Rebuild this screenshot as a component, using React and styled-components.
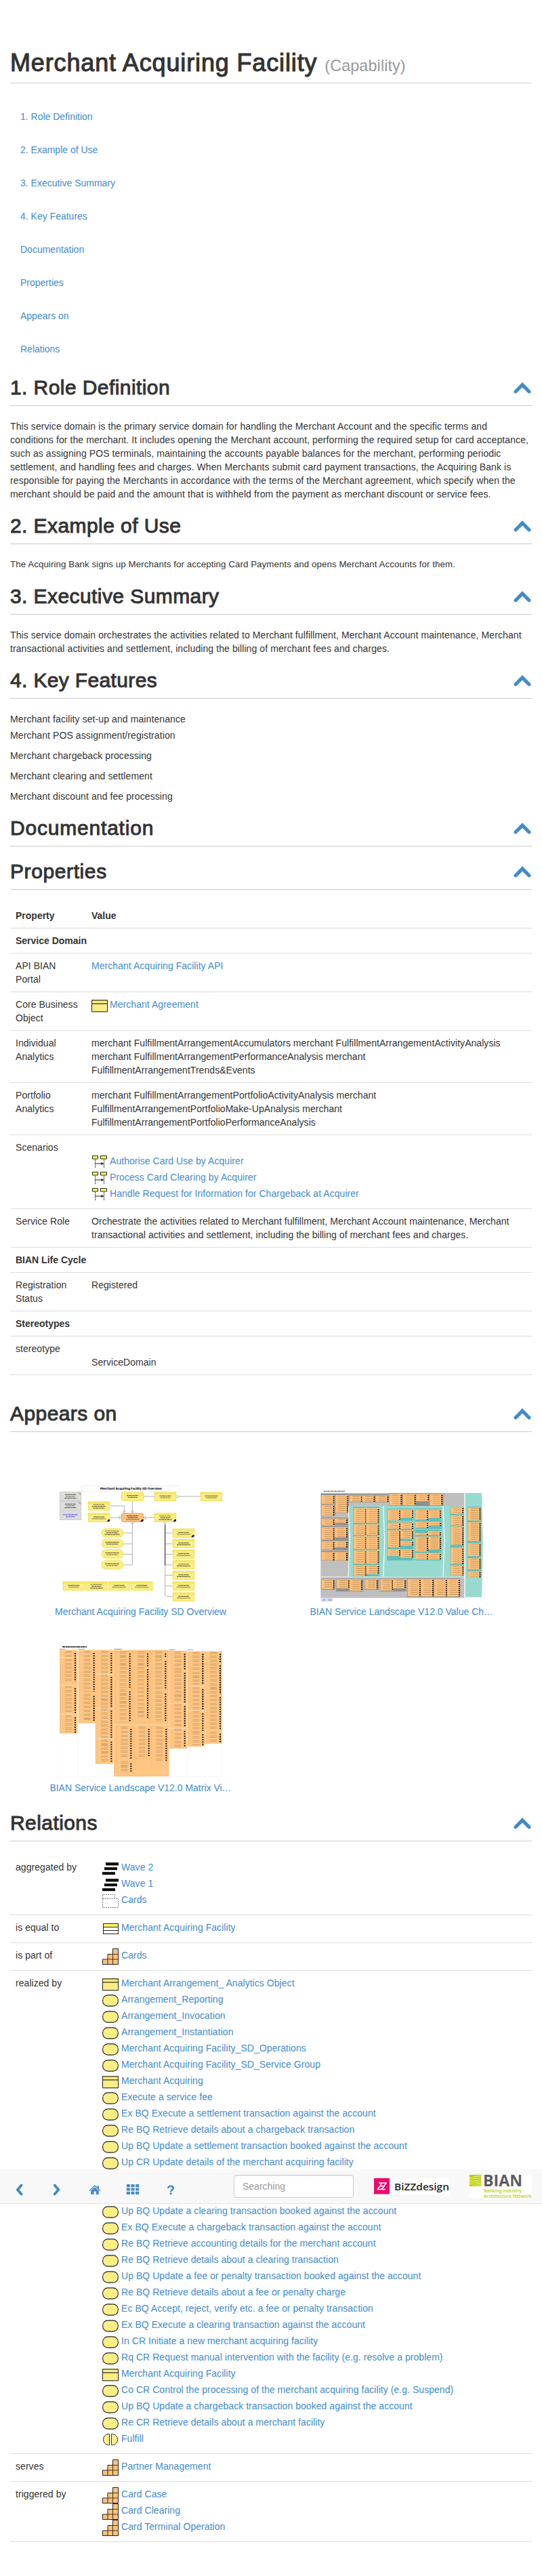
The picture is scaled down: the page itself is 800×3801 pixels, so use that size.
import React from 'react';
import styled, { createGlobalStyle } from 'styled-components';

const blue = '#428bca';
const ink = '#333';

const GlobalStyle = createGlobalStyle`
  * { box-sizing: border-box; }
  body {
    margin: 0;
    background: #fff;
    color: ${ink};
    font: 14px/20px "Liberation Sans", Arial, sans-serif;
  }
`;

const Page = styled.div`
  position: relative;
  display: flex;
  flex-direction: column;
  height: 3801px;
  padding: 73px 15px 0;
`;

const Title = styled.h1`
  margin: 0;
  height: 50px;
  border-bottom: 1px solid #ccc;
  font-size: 36px;
  line-height: 40px;
  font-weight: 400;
  letter-spacing: 0.86px;
  -webkit-text-stroke: 1.1px ${ink};
  white-space: nowrap;
`;

const Kind = styled.small`
  font-size: 23.4px;
  color: #999;
  letter-spacing: 0.1px;
  -webkit-text-stroke: 0;
`;

const Contents = styled.nav`
  display: flex;
  flex-direction: column;
  gap: 9px;
  padding: 29px 0 0;
`;

const ContentsLink = styled.a`
  padding: 10px 15px;
  color: ${blue};
  white-space: nowrap;
`;

const SectionHeader = styled.div`
  display: flex;
  justify-content: space-between;
  height: 44px;
  margin-top: 20px;
  padding-right: 1px;
  border-bottom: 1px solid #ccc;
`;

const SectionTitle = styled.h2`
  margin: 0;
  font-size: 30px;
  line-height: 33px;
  font-weight: 400;
  letter-spacing: ${(p) => p.$spacing ?? 0.42}px;
  -webkit-text-stroke: 0.95px ${ink};
`;

const UpIcon = styled.svg`
  display: block;
  width: 26px;
  height: 17px;
  margin-top: 9px;
`;

const Prose = styled.div`
  padding-top: 20px;
  font-size: ${(p) => p.$size ?? 14}px;
  letter-spacing: ${(p) => p.$spacing ?? 0.09}px;
  white-space: nowrap;
`;

const Feature = styled.p`
  margin: 0 0 ${(p) => p.$gap}px;
`;

const Table = styled.div`
  margin: 20px 0;
  border-bottom: 1px solid #ddd;
`;

const Row = styled.div`
  display: grid;
  grid-template-columns: ${(p) => p.$label}px 1fr;
  padding: 8px;
  white-space: nowrap;
  font-weight: ${(p) => (p.$bold ? 700 : 400)};
  letter-spacing: ${(p) => (p.$bold ? 0 : 0.05)}px;
  & + & {
    border-top: 1px solid #ddd;
  }
`;

const Item = styled.div`
  display: flex;
  height: 24px;
  gap: ${(p) => p.$gap ?? 4}px;
`;

const ItemIcon = styled.svg`
  display: block;
  width: 24px;
  height: 24px;
`;

const Link = styled.a`
  color: ${blue};
`;

const Blank = styled.div`
  height: ${(p) => p.$h}px;
`;

const Gallery = styled.div`
  display: grid;
  grid-template-columns: 385px 385px;
  grid-auto-rows: 260px;
  padding-top: 20px;
`;

const Card = styled.figure`
  margin: 0;
  display: flex;
  flex-direction: column;
  align-items: center;
  justify-content: flex-end;
  padding-bottom: 5px;
`;

const Thumb = styled.svg`
  display: block;
  width: 240px;
  height: ${(p) => p.$h}px;
  margin-bottom: ${(p) => p.$mb}px;
`;

const Caption = styled.figcaption`
  color: ${blue};
  width: 270px;
  text-align: center;
  white-space: nowrap;
`;

const Toolbar = styled.div`
  position: absolute;
  left: 0;
  right: 0;
  top: 3201px;
  height: 51px;
  display: flex;
  background: #f8f8f8;
  border-bottom: 1px solid #e7e7e7;
`;

const ToolButton = styled.a`
  width: 56px;
  display: flex;
  justify-content: center;
  padding-top: 21px;
  color: ${blue};
`;

const Glyph = styled.svg`
  width: 20px;
  height: 18px;
`;

const Search = styled.input`
  width: 177px;
  height: 34px;
  margin: 8px 0 0 65px;
  padding: 6px 12px;
  border: 1px solid #ccc;
  border-radius: 4px;
  background: #fff;
  box-shadow: inset 0 1px 1px rgba(0, 0, 0, 0.075);
  font: 14px/20px "Liberation Sans", Arial, sans-serif;
  &::placeholder {
    color: #999;
    opacity: 1;
  }
`;

const BizLogo = styled.svg`
  width: 111px;
  height: 25px;
  margin: 13px 0 0 30px;
  overflow: visible;
`;

const BianLogo = styled.svg`
  width: 92px;
  height: 36px;
  margin: 8px 0 0 30px;
  overflow: visible;
`;

const Header = ({ children, spacing }) => (
  <SectionHeader>
    <SectionTitle $spacing={spacing}>{children}</SectionTitle>
    <UpIcon viewBox="0 0 26 17">
      <path d="M13 0 L25.2 12.6 Q26.2 14 25 15.4 Q23 17.4 21 15.6 L13 7.4 L5 15.6 Q3 17.4 1 15.4 Q-0.2 14 0.8 12.6 Z" fill={blue} />
    </UpIcon>
  </SectionHeader>
);

const yellow = '#fbee84';

const icons = {
  object: (
    <>
      <rect x="0.5" y="4" width="23" height="16.5" fill={yellow} stroke="#222" />
      <path d="M0 3.5H24M0 20.8H24" stroke="#6f6a3c" strokeWidth="1.2" />
      <path d="M1 9H23" stroke="#7d7742" strokeWidth="2" />
    </>
  ),
  service: <rect x="0.6" y="3.9" width="22.8" height="16.2" rx="7.6" fill={yellow} stroke="#222" strokeWidth="1.1" />,
  wave: (
    <path d="M5 3.2H24V7.4H5ZM3 10.2H22V14.2H3ZM0 17.2H19V21.2H0Z" fill="#000" />
  ),
  grouping: (
    <g fill="none" stroke="#777" strokeDasharray="2 1.3">
      <path d="M0.5 21.5V2.5H18.5V8" />
      <path d="M0.5 8.5H23.5V21.5H0.5" />
    </g>
  ),
  entity: (
    <>
      <rect x="1.5" y="4.5" width="22" height="15" fill="#fff" stroke="#222" />
      <rect x="2" y="5" width="21" height="4" fill="#ffff66" />
      <path d="M1 9.5H24M1 14.5H24" stroke="#222" />
    </>
  ),
  capability: (
    <>
      <path d="M15.5 0.5H23.5V23.5H0.5V16H8V8.5H15.5Z" fill="#fdc27e" stroke="#222" />
      <path d="M15.5 8.5H23.5M8 16H23.5M8 16V23.5M15.5 8.5V23.5" stroke="#4d3717" strokeWidth="1.1" fill="none" />
    </>
  ),
  func: (
    <g fill={yellow} stroke="#333">
      <path d="M10.5 3.5H8.7A8.2 8.2 0 0 0 8.7 19.8H10.5Z" />
      <path d="M13.5 3.5H15.3A8.2 8.2 0 0 1 15.3 19.8H13.5Z" />
    </g>
  ),
  scenario: (
    <>
      <path d="M1.5 2.5H9.5V7H1.5ZM13.5 2.5H22.5V7H13.5Z" fill="#ffff66" stroke="#222" />
      <path d="M5.5 8V21M18.5 8V21" stroke="#444" strokeDasharray="2.4 0.8" />
      <path d="M5.5 14H15" stroke="#222" />
      <path d="M14.5 12L18.5 14L14.5 16Z" fill="#111" />
    </>
  ),
};

const IconItem = ({ icon, children, gap }) => (
  <Item $gap={gap}>
    <ItemIcon viewBox="0 0 24 24">{icons[icon]}</ItemIcon>
    <Link>{children}</Link>
  </Item>
);

/* dark dashes that stand for the unreadable micro labels of a thumbnail */
const Micro = ({ cx, cy, lines, w = 60, h = 8 }) =>
  Array.from({ length: lines }, (_, i) => {
    const width = w * (1 - ((i * 37 + cx) % 5) * 0.07);
    return (
      <path
        key={i}
        d={`M${cx - width / 2} ${cy - ((lines - 1) * h) / 2 + i * h}h${width}`}
        stroke="#3b3a20"
        strokeWidth="3.4"
        strokeDasharray="7 1.5 4 1 9 2"
        opacity="0.8"
      />
    );
  });

const overviewBoxes = [
  [504, 66, 2], [708, 66, 2], [210, 108, 3], [210, 159, 2], [504, 159, 3],
  [585, 228, 2], [585, 274, 2], [585, 321, 2], [585, 368, 2], [585, 415, 2], [585, 462, 2], [585, 510, 2],
  [99, 462, 2], [199, 462, 3], [300, 462, 2], [400, 462, 2],
];

const OverviewThumb = () => (
  <Thumb viewBox="84 34 720 519" $h={173} $mb={4}>
    <rect x="181" y="39" width="436" height="25" fill="#fff" stroke="#ddd" strokeWidth="1.5" />
    <text x="400" y="54" textAnchor="middle" fontSize="13.5" fontWeight="700" fontFamily="DejaVu Sans, sans-serif" textLength="273" fill="#111">
      Merchant Acquiring Facility SD Overview
    </text>
    {[66, 108, 151].map((y, i) => (
      <g key={y}>
        <rect x="85" y={y} width="94" height="38" fill="#ddd" stroke="#bbb" strokeWidth="2" />
        {i < 2 ? <Micro cx={132} cy={y + 19} lines={3} w={56} /> : <path d="M98 166H165M112 175H152" stroke="#33f" strokeWidth="3.4" strokeDasharray="7 1.5 4 1" />}
        {i < 2 && <path d={`M167 ${y + 3}l9 3v6z`} fill="#e8d94c" stroke="#555" />}
      </g>
    ))}
    <g fill="none" stroke="#888" strokeWidth="2">
      <path d="M456 85H504M606 85H708M406 104V158M308 127H370V152M308 179H350M504 179H462" />
      <path d="M365 247H406M365 295H406M365 341H406M365 388H406V205" />
      <path d="M551 205V522Q551 529 585 529M551 247H585M551 295H585M551 341H585M551 388H585M551 434H585M551 481H585" />
      <path d="M551 210V390" stroke="#222" strokeWidth="3" />
    </g>
    <g fill="#fff" stroke="#777" strokeWidth="1.5">
      <path d="M401 151h11l-5 9zM365 151h11l-5 9zM348 173v12l10-6zM464 173v12l-10-6zM401 206h11l-5-9z" />
      <circle cx="605" cy="86" r="5" /><circle cx="551" cy="203" r="5" />
    </g>
    {overviewBoxes.map(([x, y, n]) => (
      <g key={`${x}-${y}`}>
        <rect x={x + 1} y={y + 1} width="94" height="37" fill={yellow} stroke="#efe04d" strokeWidth="3" />
        <path d={`M${x - 4} ${y + 6}H${x + 95}`} stroke="#efe04d" strokeWidth="3" />
        <Micro cx={x + 48} cy={y + 21} lines={n} />
      </g>
    ))}
    {[228, 274, 321, 369].map((y) => (
      <g key={y}>
        <rect x="270" y={y} width="95" height="38" rx="17" fill={yellow} stroke="#efe04d" strokeWidth="2.5" />
        <Micro cx={317} cy={y + 18} lines={y === 228 ? 3 : 2} w={72} />
      </g>
    ))}
    <rect x="359" y="67" width="96" height="37" rx="6" fill={yellow} stroke="#efe04d" strokeWidth="3" />
    <Micro cx={407} cy={85} lines={2} />
    <rect x="359" y="160" width="96" height="37" rx="5" fill="#fdc27e" stroke="#ee9a5e" strokeWidth="3" />
    <Micro cx={407} cy={179} lines={3} />
    <path d="M295 193l6-6h6v5l-6 5h-6zM443 193l6-6h6v5l-6 5h-6zM588 193l6-6h6v5l-6 5h-6zM668 262l6-6h6v5l-6 5h-6z" fill="#111" />
  </Thumb>
);

/* x, y, height of each column of services */
const landscapeCols = [
  [72, 78, 40], [72, 122, 48], [133, 78, 78], [72, 182, 30], [130, 182, 20], [72, 220, 56], [130, 220, 46],
  [72, 282, 38], [130, 282, 28], [72, 330, 38], [130, 330, 38],
  [196, 80, 29], [252, 80, 29], [312, 80, 29], [372, 73, 51], [433, 73, 51], [492, 73, 32], [552, 73, 51],
  [214, 136, 66], [270, 136, 66], [214, 208, 48], [270, 208, 48], [214, 260, 58], [270, 260, 58],
  [214, 323, 60], [270, 323, 60], [214, 389, 48], [270, 389, 40],
  [365, 142, 48], [422, 142, 38], [365, 200, 28], [422, 200, 28], [365, 234, 76], [422, 234, 38], [422, 282, 20], [365, 318, 30], [422, 318, 38],
  [488, 142, 46], [545, 142, 38], [488, 196, 28], [545, 196, 18], [488, 246, 10], [545, 238, 18], [488, 262, 67], [545, 262, 57], [488, 335, 29], [545, 335, 29],
  [645, 130, 31], [645, 167, 46], [645, 217, 82], [645, 311, 73], [645, 390, 44],
  [721, 132, 59], [721, 198, 84], [721, 291, 58], [721, 358, 50], [721, 415, 28],
  [72, 452, 43], [139, 452, 40], [196, 452, 51], [265, 452, 43], [333, 452, 50], [389, 452, 40],
  [455, 450, 78], [512, 450, 78], [572, 450, 78], [629, 450, 78],
];

const LandscapeThumb = () => (
  <Thumb viewBox="68 57 720 496" $h={165} $mb={4}>
    <path d="M82 61H178" stroke="#222" strokeWidth="3" strokeDasharray="8 2 4 2" />
    <path d="M68 69H706V534H68Z" fill="#bfbfbf" />
    <path d="M68 441H706" stroke="#eee" strokeWidth="3" />
    <g fill="#8f8f8f">
      <path d="M70 72H191V119H132V172H70ZM132 72H192V158H132ZM194 74H370V111H194ZM370 70H612V126H370Z" />
      <path d="M70 178H191V212H70ZM70 215H191V278H70ZM70 279H191V322H70ZM70 325H191V370H70ZM70 449H132V498H70ZM137 449H257V506H137ZM263 449H326V498H263ZM331 449H448V506H331ZM453 447H687V531H453Z" />
    </g>
    <path d="M708 69H783L788 300L783 531H708ZM194 127H704V440H194Z" fill="#98dacf" />
    <path d="M191 127L197 283L191 440M346 127L352 283L346 440M611 127L618 283L611 440M708 69V531" stroke="#f1f7f5" strokeWidth="4" fill="none" />
    <g fill="#5ebdb8">
      <path d="M212 131H329V438H212ZM363 138H480V192H363ZM363 196H480V368H363ZM486 138H603V192H486ZM486 192H606V229H486ZM486 232H603V258H486ZM486 258H603V368H486ZM643 129H704V434H643ZM719 129H780V443H719Z" />
    </g>
    {landscapeCols.map(([x, y, h]) => (
      <g key={`${x}-${y}`}>
        <rect x={x} y={y} width="57" height={h} fill="#fcbf7a" />
        <path d={`M${x + 29} ${y + 5}V${y + h - 2}`} stroke="#806743" strokeWidth="32" strokeDasharray="1.8 7.2" opacity="0.6" />
        <path d={`M${x + 54} ${y + 5}V${y + h}`} stroke="#111" strokeWidth="6" strokeDasharray="5 4" />
      </g>
    ))}
    <path d="M69 535H123V549H69Z" fill="#dcdcff" />
    <path d="M76 541H90M101 541H118M76 546H90M101 546H118" stroke="#8888aa" strokeWidth="2" />
  </Thumb>
);

/* x, y, width, height of each block of the matrix */
const matrixBlocks = [
  [84, 76, 78, 367], [168, 76, 76, 322], [243, 76, 78, 502], [325, 76, 242, 558],
  [570, 79, 77, 432], [651, 82, 75, 420], [728, 82, 75, 406],
];
const matrixCols = [
  [123, 80, 135], [123, 236, 120], [123, 365, 76], [206, 80, 178], [206, 270, 118], [283, 80, 98], [283, 186, 145], [283, 335, 130], [283, 472, 98],
  [365, 82, 160], [365, 250, 142], [444, 82, 65], [444, 152, 225], [523, 82, 26], [523, 116, 135], [523, 260, 130],
  [370, 416, 140], [370, 568, 46], [449, 416, 134], [526, 416, 150],
  [608, 84, 80], [608, 168, 140], [608, 315, 98], [608, 425, 78], [688, 84, 145], [688, 240, 100], [688, 347, 90], [688, 440, 58], [765, 84, 48], [765, 135, 135], [765, 275, 155], [765, 438, 48],
];

const MatrixThumb = () => (
  <Thumb viewBox="84 55 720 582" $h={194} $mb={6}>
    <path d="M96 61H204" stroke="#111" strokeWidth="4" strokeDasharray="12 2 7 1" />
    <path d="M84 72H162V635H84ZM166 72H321V635H166ZM570 75H648V636H570ZM650 76H803V636H650ZM325 68H506V80" fill="none" stroke="#eee" strokeWidth="1.5" />
    <path d="M84 71H108M168 71H194M325 71H360M570 74H595M651 74H675" stroke="#888" strokeWidth="3" strokeDasharray="6 1" />
    {matrixBlocks.map(([x, y, w, h]) => (
      <rect key={x} x={x} y={y} width={w} height={h} fill="#ffc582" stroke="#f3bb79" strokeWidth="1.5" />
    ))}
    <path d="M325 407H567M86 108H160M86 232H160M86 360H160M244 182H320M244 333H320M244 468H320M651 236H726M651 343H726M571 311H646M571 421H646" stroke="#fbe2c2" strokeWidth="3" />
    <path d="M331 80H404V396H331ZM409 80H482V396H409ZM488 80H561V396H488ZM334 413H408V618H334ZM414 413H486V555H414ZM491 413H563V589H491Z" fill="none" stroke="#e9b06f" strokeWidth="1.2" />
    {matrixCols.map(([x, y, h]) => (
      <g key={`${x}-${y}`}>
        <path d={`M${x} ${y}V${y + h}`} stroke="#5f4a2c" strokeWidth="30" strokeDasharray="1.6 4.4 1.6 10" opacity="0.55" />
        <path d={`M${x + 30} ${y + 8}V${y + h}`} stroke="#0c0c0c" strokeWidth="6" strokeDasharray="5.5 5" />
      </g>
    ))}
  </Thumb>
);

const featureLines = [
  ['Merchant facility set-up and maintenance', 4],
  ['Merchant POS assignment/registration', 10],
  ['Merchant chargeback processing', 10],
  ['Merchant clearing and settlement', 10],
  ['Merchant discount and fee processing', 0],
];

const contents = ['1. Role Definition', '2. Example of Use', '3. Executive Summary', '4. Key Features', 'Documentation', 'Properties', 'Appears on', 'Relations'];

const realizedBefore = [
  ['object', 'Merchant Arrangement_ Analytics Object'],
  ['service', 'Arrangement_Reporting'],
  ['service', 'Arrangement_Invocation'],
  ['service', 'Arrangement_Instantiation'],
  ['service', 'Merchant Acquiring Facility_SD_Operations'],
  ['service', 'Merchant Acquiring Facility_SD_Service Group'],
  ['object', 'Merchant Acquiring'],
  ['service', 'Execute a service fee'],
  ['service', 'Ex BQ Execute a settlement transaction against the account'],
  ['service', 'Re BQ Retrieve details about a chargeback transaction'],
  ['service', 'Up BQ Update a settlement transaction booked against the account'],
  ['service', 'Up CR Update details of the merchant acquiring facility'],
];

const realizedAfter = [
  ['service', 'Up BQ Update a clearing transaction booked against the account'],
  ['service', 'Ex BQ Execute a chargeback transaction against the account'],
  ['service', 'Re BQ Retrieve accounting details for the merchant account'],
  ['service', 'Re BQ Retrieve details about a clearing transaction'],
  ['service', 'Up BQ Update a fee or penalty transaction booked against the account'],
  ['service', 'Re BQ Retrieve details about a fee or penalty charge'],
  ['service', 'Ec BQ Accept, reject, verify etc. a fee or penalty transaction'],
  ['service', 'Ex BQ Execute a clearing transaction against the account'],
  ['service', 'In CR Initiate a new merchant acquiring facility'],
  ['service', 'Rq CR Request manual intervention with the facility (e.g. resolve a problem)'],
  ['object', 'Merchant Acquiring Facility'],
  ['service', 'Co CR Control the processing of the merchant acquiring facility (e.g. Suspend)'],
  ['service', 'Up BQ Update a chargeback transaction booked against the account'],
  ['service', 'Re CR Retrieve details about a merchant facility'],
  ['func', 'Fulfill'],
];

const Items = ({ list }) => list.map(([icon, text]) => <IconItem key={text} icon={icon}>{text}</IconItem>);

const Property = ({ name, children }) => (
  <Row $label={112}>
    <div>{name}</div>
    <div>{children}</div>
  </Row>
);

const Relation = ({ name, children }) => (
  <Row $label={128}>
    <div>{name}</div>
    <div>{children}</div>
  </Row>
);

export default function App() {
  return (
    <Page>
      <GlobalStyle />
      <Title>
        Merchant Acquiring Facility <Kind>(Capability)</Kind>
      </Title>
      <Contents>
        {contents.map((c) => <ContentsLink key={c}>{c}</ContentsLink>)}
      </Contents>

      <Header>1. Role Definition</Header>
      <Prose>
        This service domain is the primary service domain for handling the Merchant Account and the specific terms and<br />
        conditions for the merchant. It includes opening the Merchant account, performing the required setup for card acceptance,<br />
        such as assigning POS terminals, maintaining the accounts payable balances for the merchant, performing periodic<br />
        settlement, and handling fees and charges. When Merchants submit card payment transactions, the Acquiring Bank is<br />
        responsible for paying the Merchants in accordance with the terms of the Merchant agreement, which specify when the<br />
        merchant should be paid and the amount that is withheld from the payment as merchant discount or service fees.
      </Prose>

      <Header>2. Example of Use</Header>
      <Prose $size={13.33} $spacing={0.07}>The Acquiring Bank signs up Merchants for accepting Card Payments and opens Merchant Accounts for them.</Prose>

      <Header>3. Executive Summary</Header>
      <Prose>
        This service domain orchestrates the activities related to Merchant fulfillment, Merchant Account maintenance, Merchant<br />
        transactional activities and settlement, including the billing of merchant fees and charges.
      </Prose>

      <Header spacing={0.35}>4. Key Features</Header>
      <Prose>
        {featureLines.map(([t, gap]) => <Feature key={t} $gap={gap}>{t}</Feature>)}
      </Prose>

      <Header spacing={0.8}>Documentation</Header>
      <Header spacing={0.6}>Properties</Header>
      <Table>
        <Row $label={112} $bold>
          <div>Property</div>
          <div>Value</div>
        </Row>
        <Row $label={112} $bold>
          <div>Service Domain</div>
        </Row>
        <Property name={<>API BIAN<br />Portal</>}><Link>Merchant Acquiring Facility API</Link></Property>
        <Property name={<>Core Business<br />Object</>}><IconItem icon="object" gap={3}>Merchant Agreement</IconItem><Blank $h={16} /></Property>
        <Property name={<>Individual<br />Analytics</>}>
          merchant FulfillmentArrangementAccumulators merchant FulfillmentArrangementActivityAnalysis<br />
          merchant FulfillmentArrangementPerformanceAnalysis merchant<br />
          FulfillmentArrangementTrends&amp;Events
        </Property>
        <Property name={<>Portfolio<br />Analytics</>}>
          merchant FulfillmentArrangementPortfolioActivityAnalysis merchant<br />
          FulfillmentArrangementPortfolioMake-UpAnalysis merchant<br />
          FulfillmentArrangementPortfolioPerformanceAnalysis
        </Property>
        <Property name="Scenarios">
          <Blank $h={20} />
          <IconItem icon="scenario" gap={3}>Authorise Card Use by Acquirer</IconItem>
          <IconItem icon="scenario" gap={3}>Process Card Clearing by Acquirer</IconItem>
          <IconItem icon="scenario" gap={3}>Handle Request for Information for Chargeback at Acquirer</IconItem>
        </Property>
        <Property name="Service Role">
          Orchestrate the activities related to Merchant fulfillment, Merchant Account maintenance, Merchant<br />
          transactional activities and settlement, including the billing of merchant fees and charges.
        </Property>
        <Row $label={112} $bold>
          <div>BIAN Life Cycle</div>
        </Row>
        <Property name={<>Registration<br />Status</>}>Registered</Property>
        <Row $label={112} $bold>
          <div>Stereotypes</div>
        </Row>
        <Property name="stereotype">
          <Blank $h={20} />
          ServiceDomain
        </Property>
      </Table>

      <Header>Appears on</Header>
      <Gallery>
        <Card>
          <OverviewThumb />
          <Caption>Merchant Acquiring Facility SD Overview</Caption>
        </Card>
        <Card>
          <LandscapeThumb />
          <Caption>BIAN Service Landscape V12.0 Value Ch…</Caption>
        </Card>
        <Card>
          <MatrixThumb />
          <Caption>BIAN Service Landscape V12.0 Matrix Vi…</Caption>
        </Card>
      </Gallery>

      <Header>Relations</Header>
      <Table>
        <Relation name="aggregated by">
          <Items list={[['wave', 'Wave 2'], ['wave', 'Wave 1'], ['grouping', 'Cards']]} />
        </Relation>
        <Relation name="is equal to">
          <Items list={[['entity', 'Merchant Acquiring Facility']]} />
        </Relation>
        <Relation name="is part of">
          <Items list={[['capability', 'Cards']]} />
        </Relation>
        <Relation name="realized by">
          <Items list={realizedBefore} />
          <Blank $h={48} />
          <Items list={realizedAfter} />
        </Relation>
        <Relation name="serves">
          <Items list={[['capability', 'Partner Management']]} />
        </Relation>
        <Relation name="triggered by">
          <Items list={[['capability', 'Card Case'], ['capability', 'Card Clearing'], ['capability', 'Card Terminal Operation']]} />
        </Relation>
      </Table>

      <Toolbar>
        <ToolButton>
          <Glyph viewBox="0 0 20 18"><path d="M13.5 2.5L8 9L13.5 15.5" fill="none" stroke={blue} strokeWidth="3.8" strokeLinecap="round" /></Glyph>
        </ToolButton>
        <ToolButton>
          <Glyph viewBox="0 0 20 18"><path d="M6.8 2.5L12.3 9L6.8 15.5" fill="none" stroke={blue} strokeWidth="3.8" strokeLinecap="round" /></Glyph>
        </ToolButton>
        <ToolButton>
          <Glyph viewBox="0 0 20 18">
            <path d="M2 10.5L10 3L18 10.5" fill="none" stroke={blue} strokeWidth="1.6" />
            <path d="M4.2 10.5L10 5.2L15.8 10.5V16H11.8V11.5H8.6V16H4.2ZM13.6 3.2H15.8V7H13.6Z" fill={blue} />
          </Glyph>
        </ToolButton>
        <ToolButton>
          <Glyph viewBox="0 0 20 18">
            {[0.8, 7.4, 14].map((x) => [1, 6.4, 11.8].map((y) => <rect key={`${x}-${y}`} x={x} y={y} width="5.2" height="4.2" rx="0.8" fill={blue} />))}
          </Glyph>
        </ToolButton>
        <ToolButton>
          <Glyph viewBox="0 0 20 18">
            <path d="M6.3 7C6.2 4.6 8 3.8 10 3.8S13.7 4.8 13.7 6.9C13.7 9.3 10.2 9 10.2 12" fill="none" stroke={blue} strokeWidth="2.6" />
            <rect x="8.8" y="13.3" width="2.9" height="2.8" fill={blue} />
          </Glyph>
        </ToolButton>
        <Search placeholder="Searching" />
        <BizLogo viewBox="0 0 111 25">
          <rect width="111" height="24.5" fill="#fff" />
          <rect width="23" height="23.5" fill="#ec0a6e" />
          <path d="M7 7H12L5.5 16.5H11M12.5 7H18L11.5 16.5H17M9 11.8H16" fill="none" stroke="#fff" strokeWidth="1.5" />
          <text x="30" y="17.5" fontSize="15" fontWeight="600" fontFamily="Open Sans, sans-serif" textLength="81" lengthAdjust="spacingAndGlyphs" fill="#2b2729">BiZZdesign</text>
        </BizLogo>
        <BianLogo viewBox="0 0 92 36">
          <rect width="92" height="34.5" fill="#fff" />
          <rect width="17.5" height="17" fill="#bccf00" />
          <path d="M0 5Q12 1 17.5 2M0 8Q12 4 17.5 5M0 11Q11 7 17.5 8M1 14Q10 9 17.5 11M4 16.5Q11 11 17.5 14M9 17Q12 14 17.5 16.5" fill="none" stroke="#fff" strokeWidth="0.7" />
          <text x="20" y="17.2" fontSize="22.5" fontWeight="700" fontFamily="Open Sans, sans-serif" textLength="58" lengthAdjust="spacingAndGlyphs" fill="#5b5c60">BIAN</text>
          <text x="21" y="26.3" fontSize="7.6" fontWeight="600" fontFamily="Open Sans, sans-serif" textLength="56" lengthAdjust="spacingAndGlyphs" fill="#bccf00">Banking Industry</text>
          <text x="21" y="34" fontSize="7.6" fontWeight="600" fontFamily="Open Sans, sans-serif" textLength="71" lengthAdjust="spacingAndGlyphs" fill="#bccf00">Architecture Network</text>
        </BianLogo>
      </Toolbar>
    </Page>
  );
}
